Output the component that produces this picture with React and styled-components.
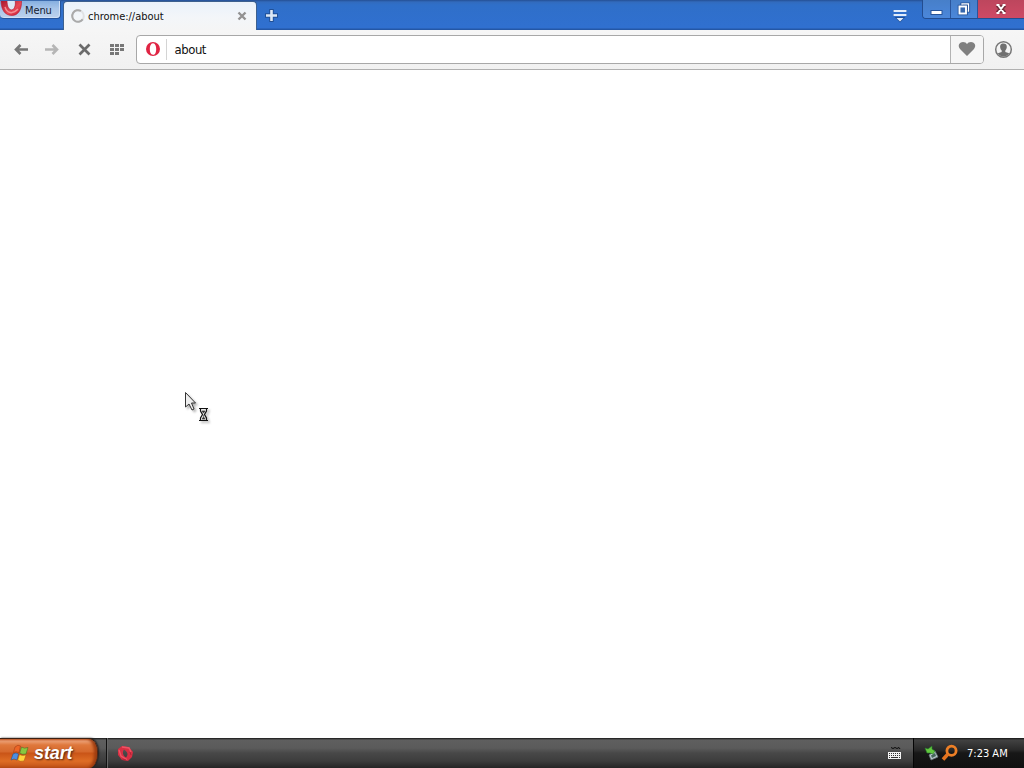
import React from "react";
import styled, { createGlobalStyle } from "styled-components";

const Global = createGlobalStyle`
  * { box-sizing: border-box; }
  html, body { margin: 0; padding: 0; background: #fff; overflow: hidden; }
  svg { display: block; flex: none; overflow: visible; }
  button { margin: 0; padding: 0; border: 0; background: none; font: inherit; color: inherit; }
`;

const Desktop = styled.div`
  position: relative;
  width: 1024px;
  height: 768px;
  display: flex;
  flex-direction: column;
  overflow: hidden;
  font-family: "DejaVu Sans Condensed", "DejaVu Sans", sans-serif;
  font-stretch: condensed;
  font-size: 11px;
  color: #111;
`;

const TitleBar = styled.header`
  height: 30px;
  flex: none;
  display: flex;
  align-items: flex-start;
  background: linear-gradient(#244f94 0, #326bbd 2px, #2f6fc9 5px, #3070d0 28px, #2457a6 29px);
`;

const MenuButton = styled.button`
  width: 61px;
  height: 19px;
  margin-right: 2px;
  display: flex;
  overflow: hidden;
  border: 1px solid #24549c;
  border-top-color: #3d6caf;
  border-left: 0;
  border-radius: 0 0 4px 4px;
  background: linear-gradient(#86afe0, #a8c5e9 45%, #bdd2ed);
  box-shadow: inset -1px -1px 0 #d0e0f5;
`;

const MenuLabel = styled.span`
  margin: 1px 0 0 3px;
  line-height: 17px;
  letter-spacing: -0.1px;
  color: #14202f;
`;

const Tab = styled.div`
  width: 194px;
  height: 29px;
  margin-top: 1px;
  padding: 0 9px 0 7px;
  display: flex;
  align-items: center;
  border: 1px solid #3c608f;
  border-bottom: 0;
  border-radius: 4px 4px 0 0;
  background: linear-gradient(#eaf2fb, #f3f6f9 55%, #f5f5f5);
`;

const TabTitle = styled.span`
  flex: 1;
  margin-left: 3px;
  padding-top: 1px;
  line-height: 16px;
  white-space: nowrap;
  letter-spacing: -0.02px;
`;

const NewTab = styled.button`
  width: 29px;
  height: 30px;
  display: grid;
  place-items: center;
`;

const TabMenu = styled.button`
  margin: 9px 15px 0 auto;
`;

const WindowButtons = styled.div`
  display: flex;
  width: 102px;
  height: 19px;
  border: 1px solid #234d90;
  border-top: 0;
  border-right: 0;
  border-radius: 0 0 0 4px;
  overflow: hidden;
`;

const WindowButton = styled.button`
  width: ${(p) => p.$width}px;
  height: 18px;
  display: grid;
  place-items: center;
  border-left: ${(p) => (p.$first ? "0" : "1px solid #2a559c")};
  background: ${(p) => (p.$close ? "linear-gradient(#bd465d, #ce4a65)" : "linear-gradient(#477fc9, #4b87da)")};
`;

const Toolbar = styled.nav`
  height: 40px;
  flex: none;
  display: flex;
  align-items: center;
  padding: 0 11px 1px 13px;
  background: linear-gradient(#f6f6f6, #f1f1f1);
  border-bottom: 1px solid #b0b0b0;
`;

const ToolButton = styled.button`
  width: 16px;
  height: 16px;
  margin-right: ${(p) => p.$gap}px;
`;

const AddressBar = styled.div`
  width: 848px;
  height: 29px;
  margin-right: 10px;
  display: flex;
  align-items: center;
  border: 1px solid #a8a8a8;
  border-radius: 4px;
  background: #fff;
  padding-left: 8px;
`;

const Divider = styled.span`
  width: 1px;
  height: 21px;
  margin: 0 7.5px 0 5px;
  background: #d4d4d4;
`;

const Address = styled.span`
  flex: 1;
  padding-top: 2px;
  font-size: 13px;
  line-height: 18px;
  letter-spacing: -0.45px;
`;

const Bookmark = styled.button`
  width: 33px;
  height: 27px;
  display: grid;
  place-items: center;
  border-left: 1px solid #b3b3b3;
  border-radius: 0 3px 3px 0;
  background: #f6f6f6;
`;

const Page = styled.main`
  flex: 1;
  background: #fff;
`;

const Taskbar = styled.footer`
  height: 30px;
  flex: none;
  display: flex;
  align-items: stretch;
  background: linear-gradient(#151515 0, #5f5f5f 2px, #5b5b5b 10px, #484848 15px, #3d3d3d 23px, #252525 30px);
`;

const StartButton = styled.button`
  width: 98px;
  display: flex;
  align-items: center;
  padding: 0 0 1px 10px;
  border-top: 1px solid #3b2013;
  border-right: 1px solid #582611;
  border-radius: 0 9px 9px 0 / 0 14px 14px 0;
  background: linear-gradient(#d86d38 0, #eca075 2px, #df783c 6px, #d5682c 13px, #c95417 14px, #de6d25 22px, #c45519 28px);
  box-shadow: inset -3px 0 3px #9e3d10, 1px 0 2px #202020;
`;

const StartLabel = styled.span`
  margin-left: 4px;
  font: italic bold 18px/24px "Liberation Sans", Arial, sans-serif;
  letter-spacing: -0.1px;
  color: #fff;
  text-shadow: 1px 1px 2px #4d2413;
`;

const QuickLaunch = styled.div`
  margin: 0 auto 0 8px;
  padding-left: 10px;
  display: flex;
  align-items: center;
  border-left: 1px solid #111;
  box-shadow: inset 1px 0 #666;
`;

const KeyboardButton = styled.button`
  margin: 1px 12px 0 0;
  display: flex;
  align-items: center;
`;

const Tray = styled.div`
  width: 111px;
  display: flex;
  align-items: center;
  padding-left: 11px;
  border-left: 1px solid #050505;
  background: linear-gradient(#151515 0, #424242 2px, #292929 12px, #171717 15px, #101010);
`;

const Clock = styled.time`
  margin: 1px 0 0 9px;
  color: #fff;
  line-height: 16px;
  white-space: nowrap;
`;

const Pointer = styled.div`
  position: absolute;
  left: 184px;
  top: 391px;
  filter: drop-shadow(2px 2px 1px rgba(0, 0, 0, 0.3));
`;

function Arrow({ forward }) {
  return (
    <svg width="16" height="16" viewBox="0 0 16 16">
      <path
        d={forward ? "M1 8.5H13M8.5 4L13 8.5L8.5 13" : "M15 8.5H3M7.5 4L3 8.5L7.5 13"}
        stroke={forward ? "#b5b5b5" : "#777"}
        strokeWidth="2.6"
        fill="none"
      />
    </svg>
  );
}

function MenuLogo() {
  return (
    <svg width="22" height="18" viewBox="0 0 22 18">
      <defs>
        <linearGradient id="menuRed" x1="0" y1="0" x2="1" y2="1">
          <stop offset="0" stopColor="#a7162b" />
          <stop offset=".6" stopColor="#e84855" />
          <stop offset="1" stopColor="#c51c35" />
        </linearGradient>
      </defs>
      <path d="M7 -1C7 6 9 9 12 9C15 8 16 3 15 -1Z" fill="#dce8f5" />
      <path
        d="M1 -1H7C7 6 9 9 12 9C15 8 16 3 15 -1H21.5C22 9 18 14.5 12 14.5C5 14.5 1 9 1 -1Z"
        fill="url(#menuRed)"
        stroke="#b7192f"
        strokeWidth=".6"
      />
      <path d="M5 6C7 12 12 14 18 8" stroke="#f38d92" strokeWidth="1.5" fill="none" />
    </svg>
  );
}

function Windows() {
  return (
    <svg width="20" height="19" viewBox="0 0 20 19">
      <path d="M5 3Q8 0 10.5 2L9 8.5Q6 7 3.5 8.5Z" fill="#ec6525" stroke="#9b3512" strokeWidth=".5" />
      <path d="M11.5 3Q14 5 18 3.5L16 10Q12 11 9.7 9Z" fill="#88c83f" stroke="#416225" strokeWidth=".5" />
      <path d="M3 10Q6 8 8.5 10L7 16Q4 14 1 16Z" fill="#4c8ee0" stroke="#254c7c" strokeWidth=".5" />
      <path d="M9.5 10.5Q12 12 16 11L14 17Q10 18 7.7 16Z" fill="#ffd43c" stroke="#a95913" strokeWidth=".5" />
    </svg>
  );
}

function TaskOpera() {
  return (
    <svg width="16" height="17" viewBox="0 0 16 17">
      <path
        fillRule="evenodd"
        d="M5 1L12 2L16 7L15 12L11 16L5 15L1 10L1 4ZM7 4.5C5 7 6 11 9 12.5C11.5 10 11 7 7 4.5Z"
        fill="#d82f43"
      />
      <path d="M5 2L12 3L14 7M2 5L4 11L10 14.5" fill="none" stroke="#ed5364" strokeWidth="1.4" />
      <path d="M5 14L9 15M13 7L14 10" stroke="#a92034" strokeWidth=".8" />
    </svg>
  );
}

export default function App() {
  return (
    <>
      <Global />
      <Desktop>
        <TitleBar>
          <MenuButton>
            <MenuLogo />
            <MenuLabel>Menu</MenuLabel>
          </MenuButton>
          <Tab>
            <svg width="14" height="14" viewBox="0 0 14 14">
              <circle cx="7" cy="7" r="5.8" fill="none" stroke="#e0e2e4" strokeWidth="2" />
              <path d="M10 2A5.8 5.8 0 1 0 11.7 10.4" fill="none" stroke="#aaa" strokeWidth="2" />
            </svg>
            <TabTitle>chrome://about</TabTitle>
            <svg width="10" height="10" viewBox="0 0 10 10">
              <path d="M1.5 1.5L8.5 8.5M8.5 1.5L1.5 8.5" stroke="#929292" strokeWidth="2.4" />
            </svg>
          </Tab>
          <NewTab>
            <svg width="13" height="13" viewBox="0 0 13 13">
              <path d="M6.5 0V13M0 6.5H13" stroke="#205097" strokeWidth="4.5" />
              <path d="M6.5 1V12M1 6.5H12" stroke="#dce8f6" strokeWidth="2.6" />
            </svg>
          </NewTab>
          <TabMenu>
            <svg width="14" height="13" viewBox="0 0 14 13">
              <path d="M0 2H14M0 6H14M4 9H10L7 12Z" stroke="#205097" strokeWidth="2" fill="#205097" />
              <path d="M0.5 1H13.5V3H0.5ZM0.5 5H13.5V7H0.5ZM3.5 9H10.5L7 12.5Z" fill="#e1edfb" />
            </svg>
          </TabMenu>
          <WindowButtons>
            <WindowButton $width={27} $first>
              <svg width="13" height="17" viewBox="0 0 13 17">
                <rect x="1" y="9.5" width="11" height="4" fill="#fff" stroke="#26549a" />
              </svg>
            </WindowButton>
            <WindowButton $width={27}>
              <svg width="14" height="14" viewBox="0 0 14 14">
                <path d="M5 4V2H11.5V9H9" stroke="#26549a" strokeWidth="3.2" fill="none" />
                <path d="M5 3V2H11.5V9H10" stroke="#fff" strokeWidth="1.3" fill="none" />
                <rect x="2.5" y="4.5" width="6.5" height="7" stroke="#26549a" strokeWidth="3.6" fill="none" />
                <rect x="2.5" y="4.5" width="6.5" height="7" stroke="#fff" strokeWidth="1.9" fill="#3768ae" />
              </svg>
            </WindowButton>
            <WindowButton $width={47} $close>
              <svg width="12" height="12" viewBox="0 0 12 12">
                <path d="M2.5 2L9.5 10M9.5 2L2.5 10" stroke="#722a38" strokeWidth="4.3" />
                <path d="M3 2L9 10M9 2L3 10M1.5 2H4.5M7.5 2H10.5M1.5 10H4.5M7.5 10H10.5" stroke="#fff" strokeWidth="2" />
              </svg>
            </WindowButton>
          </WindowButtons>
        </TitleBar>
        <Toolbar>
          <ToolButton $gap={15}><Arrow /></ToolButton>
          <ToolButton $gap={16}><Arrow forward /></ToolButton>
          <ToolButton $gap={16}>
            <svg width="16" height="16" viewBox="0 0 16 16">
              <path d="M3.5 3.5L13.5 13.5M13.5 3.5L3.5 13.5" stroke="#6b6b6b" strokeWidth="2.7" />
            </svg>
          </ToolButton>
          <ToolButton $gap={12}>
            <svg width="16" height="16" viewBox="0 0 16 16">
              <path d="M2 3H6V6H2ZM7 3H11V6H7ZM12 3H16V6H12ZM2 7H6V10H2ZM7 7H11V10H7ZM12 7H16V10H12ZM2 11H6V14H2ZM7 11H11V14H7Z" fill="#777" />
            </svg>
          </ToolButton>
          <AddressBar>
            <svg width="16" height="16" viewBox="0 0 16 16">
              <path fillRule="evenodd" d="M8 1A7 7 0 1 1 8 15A7 7 0 1 1 8 1ZM8 2.2C5.6 2.5 4.8 5 4.8 8S5.6 13.5 8 13.8S11.2 11 11.2 8S10.4 2.5 8 2.2Z" fill="#e02443" />
            </svg>
            <Divider />
            <Address>about</Address>
            <Bookmark>
              <svg width="18" height="16" viewBox="0 0 18 16">
                <path d="M9 15L2 8C-1 4 2 1 5 1Q8 1 9 3Q10 1 13 1C16 1 19 4 16 8Z" fill="#808080" />
              </svg>
            </Bookmark>
          </AddressBar>
          <svg width="18" height="18" viewBox="0 0 18 18">
            <circle cx="9.5" cy="9.5" r="7.8" fill="none" stroke="#777" strokeWidth="1.5" />
            <path d="M9.5 3.5C6.5 3.5 5.8 5.5 6.3 8C6.6 9.5 7.3 10 7.7 10.5V12L3.8 13.2Q6 16.5 9.5 16.5T15.2 13.2L11.3 12V10.5C12.2 9.5 12.8 8.5 12.8 6.8Q12.7 3.5 9.5 3.5Z" fill="#707070" />
          </svg>
        </Toolbar>
        <Page />
        <Taskbar>
          <StartButton>
            <Windows />
            <StartLabel>start</StartLabel>
          </StartButton>
          <QuickLaunch><TaskOpera /></QuickLaunch>
          <KeyboardButton>
            <svg width="13" height="13" viewBox="0 0 13 13">
              <path d="M3 .5L5 1.5L7 .5L9 1.5L11 .5L12 2" stroke="#090909" fill="none" />
              <path d="M0 5H13V12H0Z" fill="#f4f4f4" />
              <path d="M1 6.5H12M1 8.5H12" stroke="#333" strokeDasharray="1 1" />
              <path d="M1 10.5H2M3 10.5H10M11 10.5H12" stroke="#333" />
            </svg>
          </KeyboardButton>
          <Tray>
            <svg width="14" height="17" viewBox="0 0 14 17">
              <path d="M4 10L10 6L13 12L6 15Z" fill="#b7c6c9" stroke="#637176" strokeWidth=".8" />
              <path d="M6 10.5L10 8L11 11L7 13Z" fill="#45665c" />
              <path d="M0 3L3 4L7 1L7 4L10 6L8 9L5 8L2 8Z" fill="#63c83f" stroke="#267c2c" strokeWidth=".6" />
            </svg>
            <svg width="19" height="18" viewBox="0 0 19 18">
              <circle cx="12.5" cy="6.8" r="4.6" fill="none" stroke="#ed7f26" strokeWidth="2.8" />
              <path d="M9 10L4 15.5" stroke="#e37320" strokeWidth="3.6" />
            </svg>
            <Clock>7:23 AM</Clock>
          </Tray>
        </Taskbar>
        <Pointer>
          <svg width="28" height="32" viewBox="0 0 28 32">
            <path d="M1.5 1.5V16L5 13L8 19L10 18L7.5 12H11.5Z" fill="#eee" stroke="#333" />
            <path d="M15 17.5H24M15 29.5H24M16.5 18V20L18.5 23.5L16.5 27V29M22.5 18V20L20.5 23.5L22.5 27V29" fill="none" stroke="#111" strokeWidth="1.2" />
            <path d="M18 20H21L19.5 22ZM19.5 24V26L18 28H21L19.5 26" fill="#333" stroke="#333" strokeWidth=".6" />
          </svg>
        </Pointer>
      </Desktop>
    </>
  );
}
